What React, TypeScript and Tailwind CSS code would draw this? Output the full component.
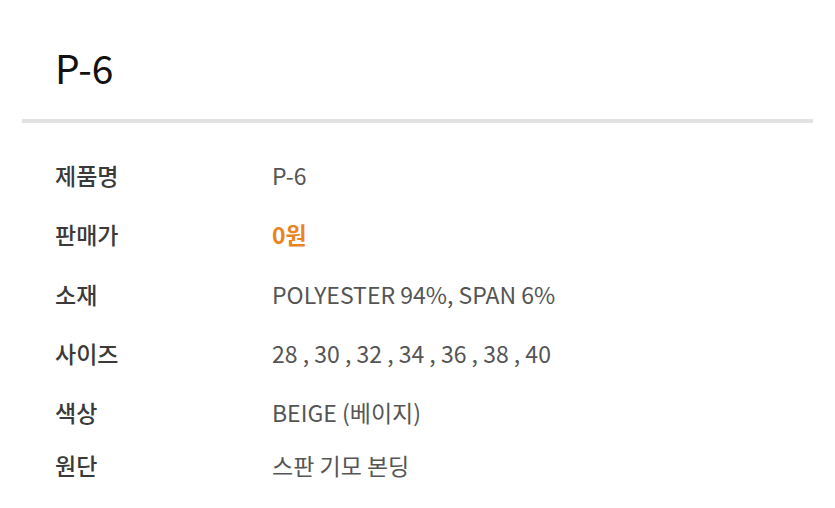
const rows: { label: string; value: string; accent?: boolean; h: string }[] = [
  { label: "제품명", value: "P-6", h: "h-[60px]" },
  { label: "판매가", value: "0원", accent: true, h: "h-[59px]" },
  { label: "소재", value: "POLYESTER 94%, SPAN 6%", h: "h-[60px]" },
  { label: "사이즈", value: "28 , 30 , 32 , 34 , 36 , 38 , 40", h: "h-[59px]" },
  { label: "색상", value: "BEIGE (베이지)", h: "h-[59px]" },
  { label: "원단", value: "스판 기모 본딩", h: "h-[46px]" },
]

export default function App() {
  return (
    <div
      className="w-[835px] h-[508px] bg-white overflow-hidden"
      style={{ fontFamily: '"Noto Sans CJK KR", "Noto Sans", sans-serif' }}
    >
      <div className="px-[22px]">
        {/* Title */}
        <div className="h-[119px] flex items-center pl-[33px] pt-[16px]">
          <h1 className="text-[39px] leading-none text-[#111] font-normal">P-6</h1>
        </div>
        <div className="h-[4px] bg-[#e2e2e2]" />

        {/* Spec list */}
        <div className="pl-[33px] pt-[22px]">
          {rows.map((r) => (
            <div key={r.label} className={`flex items-center ${r.h}`}>
              <div className="w-[217px] text-[23px] font-medium text-[#3a3a3a]">{r.label}</div>
              <div
                className={
                  r.accent
                    ? "text-[23px] font-bold text-[#e8851f]"
                    : "text-[23px] text-[#555]"
                }
              >
                {r.value}
              </div>
            </div>
          ))}
        </div>
      </div>
    </div>
  )
}
